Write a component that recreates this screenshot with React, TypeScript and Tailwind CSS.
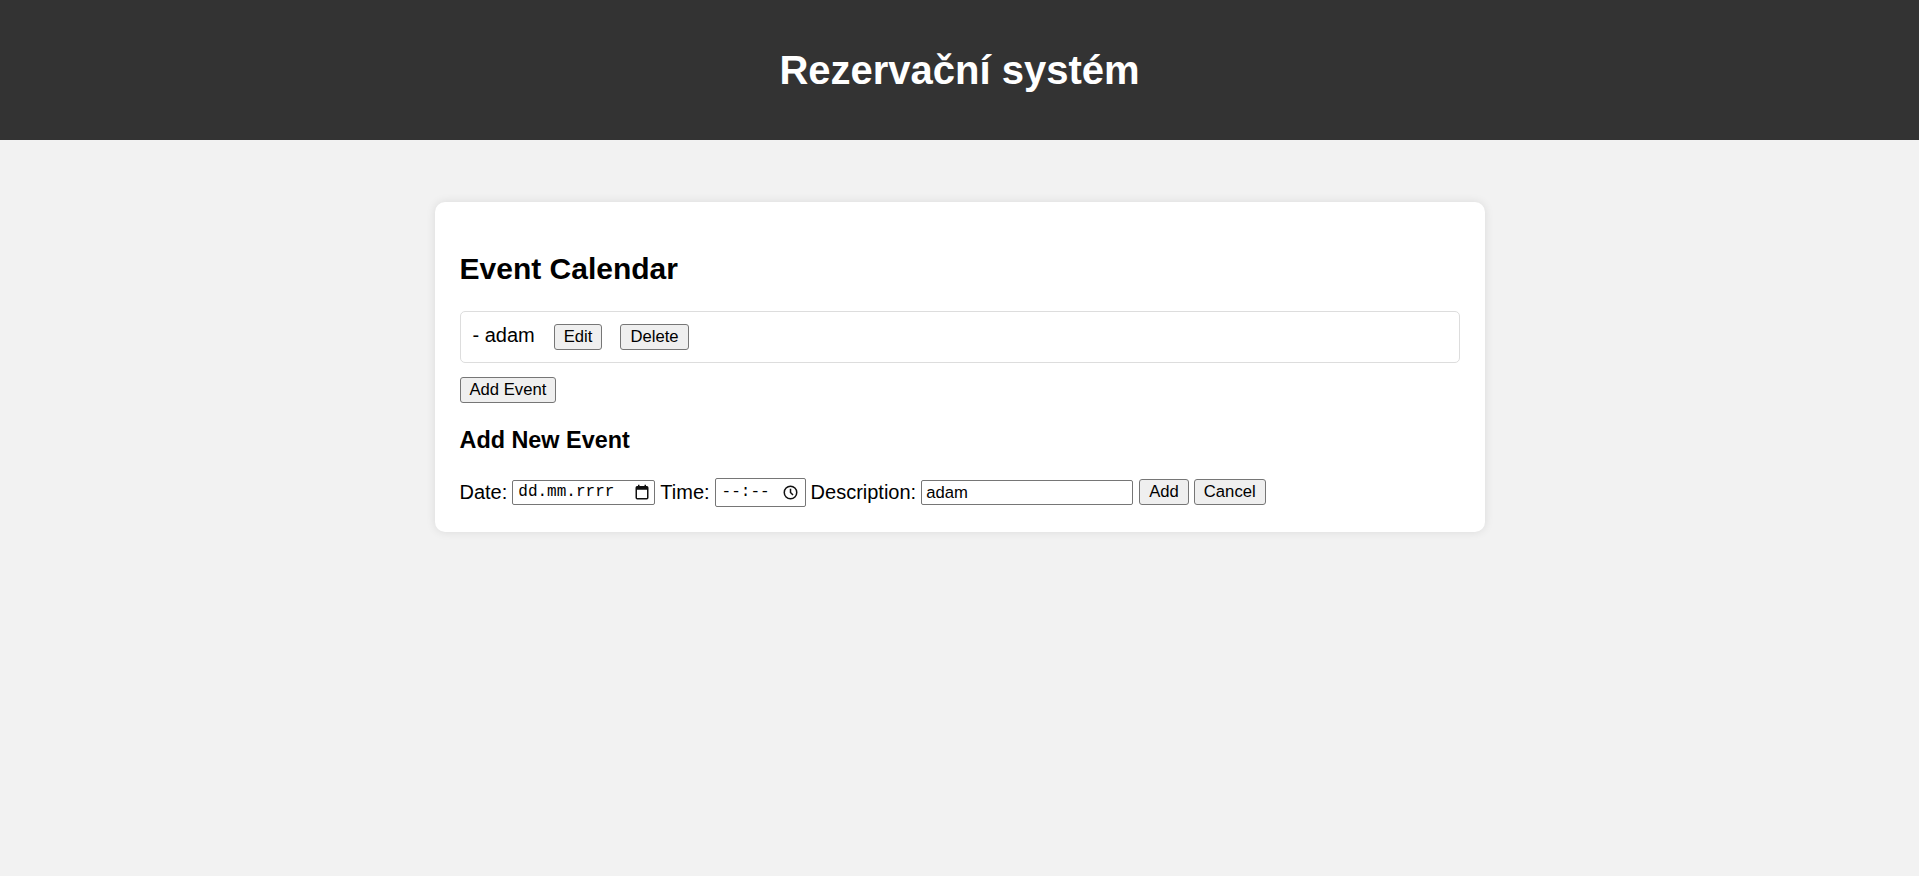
const btn =
  "h-[26px] rounded-[3px] border border-[#767676] bg-[#efefef] px-[9px] text-[16.67px] leading-[20px] text-black";

function CalendarIcon() {
  return (
    <svg width="14" height="16" viewBox="0 0 14 16" fill="none">
      <rect x="1.25" y="2.75" width="11.5" height="12" rx="1" stroke="#111" strokeWidth="1.5" />
      <rect x="1.25" y="2.75" width="11.5" height="3" fill="#111" />
      <path d="M3.75 0.75v3M10.25 0.75v3" stroke="#111" strokeWidth="1.5" />
    </svg>
  );
}

function ClockIcon() {
  return (
    <svg width="15" height="15" viewBox="0 0 15 15" fill="none">
      <circle cx="7.5" cy="7.5" r="6.25" stroke="#111" strokeWidth="1.5" />
      <path d="M7.5 3.75V7.5l2.5 2.5" stroke="#111" strokeWidth="1.5" />
    </svg>
  );
}

function EventItem({ name }: { name: string }) {
  return (
    <div className="mt-[27px] flex items-baseline rounded-[5px] border border-[#dddddd] px-[12px] py-[12px]">
      <span className="text-[20px] leading-[23px]">- {name}</span>
      <button className={`${btn} ml-[19px]`}>Edit</button>
      <button className={`${btn} ml-[18px]`}>Delete</button>
    </div>
  );
}

function AddEventForm() {
  return (
    <div className="mt-[23px] flex items-center gap-[5px] text-[20px]">
      <span>Date:</span>
      <div className="flex h-[25px] w-[143px] items-center justify-between rounded-[2px] border border-[#767676] pl-[5px] pr-[5px]">
        <span className="font-['Liberation_Mono',monospace] text-[16px] leading-none">dd.mm.rrrr</span>
        <CalendarIcon />
      </div>
      <span>Time:</span>
      <div className="flex h-[29px] w-[91px] items-center justify-between rounded-[2px] border border-[#767676] pl-[6px] pr-[7px]">
        <span className="font-['Liberation_Mono',monospace] text-[16px] leading-none">--:--</span>
        <ClockIcon />
      </div>
      <span>Description:</span>
      <div className="flex h-[25px] w-[212px] items-center rounded-[2px] border border-[#767676] px-[4px] text-[16.67px]">
        adam
      </div>
      <button className={`${btn} ml-[1px]`}>Add</button>
      <button className={btn}>Cancel</button>
    </div>
  );
}

export default function App() {
  return (
    <div className="min-h-screen bg-[#f2f2f2] font-['Liberation_Sans',Arial,sans-serif] text-black">
      <header className="flex h-[140px] items-center justify-center bg-[#333333]">
        <h1 className="text-[40px] font-bold text-white">Rezervační systém</h1>
      </header>
      <div className="mx-auto mt-[62px] w-[1050px] rounded-[10px] bg-white px-[25px] pb-[25px] pt-[52px] shadow-[0_0_10px_rgba(0,0,0,0.1)]">
        <h2 className="text-[30px] font-bold leading-[30px]">Event Calendar</h2>
        <EventItem name="adam" />
        <button className={`${btn} mt-[14px]`}>Add Event</button>
        <h3 className="mt-[24px] text-[23.4px] font-bold leading-[27px]">Add New Event</h3>
        <AddEventForm />
      </div>
    </div>
  );
}
